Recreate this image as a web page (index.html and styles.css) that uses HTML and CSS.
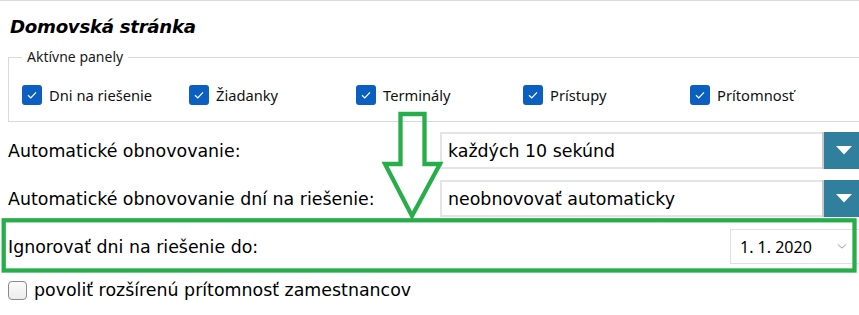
FILE: index.html
```html
<!DOCTYPE html>
<html lang="sk">
<head>
<meta charset="utf-8">
<title>Domovská stránka</title>
<link rel="stylesheet" href="styles.css">
</head>
<body>
<div class="page">
  <h1 class="title">Domovská stránka</h1>
  <fieldset class="panels">
    <legend class="panels-legend">Aktívne panely</legend>
    <div class="panel-grid">
      <label class="panel-item"><span class="cb cb-on"><svg viewBox="0 0 20 20" class="tick"><path d="M6 10.3 L8.8 13 L14 7.4"/></svg></span>Dni na riešenie</label>
      <label class="panel-item"><span class="cb cb-on"><svg viewBox="0 0 20 20" class="tick"><path d="M6 10.3 L8.8 13 L14 7.4"/></svg></span>Žiadanky</label>
      <label class="panel-item"><span class="cb cb-on"><svg viewBox="0 0 20 20" class="tick"><path d="M6 10.3 L8.8 13 L14 7.4"/></svg></span>Terminály</label>
      <label class="panel-item"><span class="cb cb-on"><svg viewBox="0 0 20 20" class="tick"><path d="M6 10.3 L8.8 13 L14 7.4"/></svg></span>Prístupy</label>
      <label class="panel-item"><span class="cb cb-on"><svg viewBox="0 0 20 20" class="tick"><path d="M6 10.3 L8.8 13 L14 7.4"/></svg></span>Prítomnosť</label>
    </div>
  </fieldset>

  <div class="form">
    <div class="row row-select">
      <div class="row-label">Automatické obnovovanie:</div>
      <div class="select">
        <div class="select-value">každých 10 sekúnd</div>
        <div class="select-btn"><svg viewBox="0 0 16 9" class="tri"><path d="M0 0 H16 L8 8.5 Z"/></svg></div>
      </div>
    </div>
    <div class="row row-select">
      <div class="row-label">Automatické obnovovanie dní na riešenie:</div>
      <div class="select">
        <div class="select-value">neobnovovať automaticky</div>
        <div class="select-btn"><svg viewBox="0 0 16 9" class="tri"><path d="M0 0 H16 L8 8.5 Z"/></svg></div>
      </div>
    </div>
    <div class="row row-date">
      <div class="row-label">Ignorovať dni na riešenie do:</div>
      <div class="date">
        <span class="date-value">1. 1. 2020</span>
        <svg viewBox="0 0 12 8" class="chev"><path d="M1 1.5 L6 6 L11 1.5"/></svg>
      </div>
    </div>
    <label class="row row-check">
      <span class="cb cb-off"></span>
      <span class="check-label">povoliť rozšírenú prítomnosť zamestnancov</span>
    </label>
  </div>

  <svg class="annot" viewBox="0 0 859 315" width="859" height="315">
    <polygon points="400.5,114 424.5,114 424.5,164 440,164 412,216 385,164 400.5,164" />
    <rect x="3.7" y="220.3" width="850.8" height="50.2" />
  </svg>
</div>
</body>
</html>
```

FILE: styles.css
```css
html, body {
  margin: 0;
  padding: 0;
  background: #ffffff;
}

body {
  width: 859px;
  height: 315px;
  overflow: hidden;
}

.page {
  position: relative;
  width: 859px;
  height: 314px;
  border-top: 1px solid #dadada;
  color: #000;
}

.title {
  margin: 14px 0 0 10px;
  font-family: "DejaVu Sans", sans-serif;
  font-weight: bold;
  font-style: italic;
  font-size: 18.2px;
  line-height: 24px;
  letter-spacing: -0.3px;
}

.panels {
  margin: 9px 0 0 8px;
  width: 851px;
  box-sizing: border-box;
  padding: 0 0 0 13px;
  border: 1px solid #d9d9d9;
  border-right: none;
  min-width: 0;
}

.panels-legend {
  padding: 0 5px;
  font-family: "Noto Sans", sans-serif;
  font-size: 14px;
  line-height: 18px;
  color: #1a1a1a;
}

.panel-grid {
  display: grid;
  grid-template-columns: repeat(5, 167px);
  padding: 19px 0 16px 0;
}

.panel-item {
  display: flex;
  align-items: center;
  gap: 7px;
  font-family: "Noto Sans", sans-serif;
  font-size: 14.7px;
  height: 20px;
  color: #111;
}

.cb {
  flex: 0 0 auto;
  width: 20px;
  height: 20px;
  box-sizing: border-box;
  border-radius: 3px;
  display: inline-flex;
  align-items: center;
  justify-content: center;
}

.cb-on {
  background: #0b5fc0;
}

.tick {
  width: 20px;
  height: 20px;
  fill: none;
  stroke: #ffffff;
  stroke-width: 1.2;
}

.cb-off {
  width: 19px;
  height: 19px;
  border: 1px solid #8a8a8a;
  border-radius: 4px;
  background: linear-gradient(#fbfbfb, #ececec);
}

.form {
  margin-top: 10px;
  padding-left: 8px;
  font-family: "DejaVu Sans", sans-serif;
  font-size: 17.4px;
}

.row {
  display: flex;
  align-items: center;
}

.row-label {
  flex: 0 0 432px;
}

.row-select {
  height: 37px;
  margin-bottom: 11px;
}

.select {
  flex: 1;
  display: flex;
  height: 37px;
  box-sizing: border-box;
  border: 2px solid #e4e4e4;
  border-right: none;
}

.select-value {
  flex: 1;
  display: flex;
  align-items: center;
  padding-left: 6px;
}

.select-btn {
  flex: 0 0 35px;
  margin-top: -2px;
  margin-bottom: -2px;
  border-left: 2px solid #c9c9c9;
  background: #307f9c;
  display: flex;
  align-items: center;
  justify-content: center;
}

.tri {
  width: 16px;
  height: 9px;
  fill: #ffffff;
  margin-left: 4px;
}

.row-date {
  height: 35px;
  margin-top: 12px;
}

.row-date .row-label {
  flex: 0 0 722px;
}

.date {
  flex: 1;
  height: 35px;
  box-sizing: border-box;
  border: 1px solid #e0e0e0;
  border-right: none;
  display: flex;
  align-items: center;
  padding-left: 9px;
  font-family: "Noto Sans", sans-serif;
  font-size: 16px;
}

.date-value {
  flex: 1;
}

.chev {
  width: 10px;
  height: 7px;
  fill: none;
  stroke: #8a8a8a;
  stroke-width: 1;
  margin-right: 12px;
}

.row-check {
  margin-top: 17px;
  height: 19px;
  gap: 7px;
}

.check-label {
  line-height: 19px;
}

.annot {
  position: absolute;
  left: 0;
  top: -1px;
  pointer-events: none;
  fill: none;
  stroke: #27ae4a;
  stroke-width: 4.3;
  stroke-linejoin: miter;
}
```
